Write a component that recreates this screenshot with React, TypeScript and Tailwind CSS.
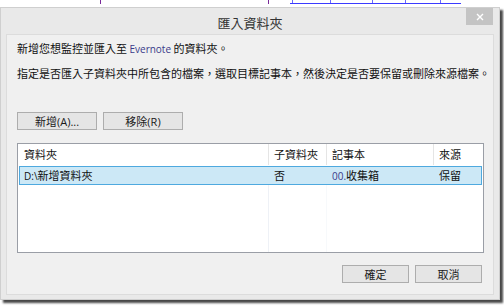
import React from "react";

const cjk = { fontFamily: '"Noto Sans CJK TC", "Noto Sans", sans-serif' };

function Btn({ children, w }: { children: React.ReactNode; w: string }) {
  return (
    <div
      className={`${w} h-[18px] flex items-center justify-center border border-[#adadad] bg-[#e5e5e5] text-[11px] text-[#1a1a1a] leading-none`}
    >
      {children}
    </div>
  );
}

export default function App() {
  return (
    <div className="w-[504px] h-[307px] bg-white overflow-hidden relative" style={cjk}>
      {/* cropped link fragments above */}
      <div className="h-[7px] relative">
        <div className="absolute left-[100px] top-0 w-[1px] h-[4px] bg-[#7a2a9a]" />
        <div className="absolute left-[268px] top-0 w-[1px] h-[4px] bg-[#7a2a9a]" />
        <div className="absolute left-[290px] top-[3px] w-[171px] h-[1px] bg-[#3b3bff]" />
        <div className="absolute left-[292px] top-0 w-[1px] h-[3px] bg-[#6a6aff]" />
        <div className="absolute left-[330px] top-0 w-[1px] h-[3px] bg-[#6a6aff]" />
        <div className="absolute left-[372px] top-0 w-[1px] h-[3px] bg-[#6a6aff]" />
        <div className="absolute left-[405px] top-0 w-[1px] h-[3px] bg-[#6a6aff]" />
        <div className="absolute left-[440px] top-0 w-[1px] h-[3px] bg-[#6a6aff]" />
      </div>
      {/* window */}
      <div className="w-[500px] h-[293px] bg-[#e9e9e9] border border-[#cfcfcf] shadow-[3px_3px_2px_rgba(40,40,40,0.85)] flex flex-col">
        {/* title bar */}
        <div className="h-[26px] flex items-center relative">
          <div className="flex-1 text-center text-[13px] text-[#333] leading-none pt-[2px]">匯入資料夾</div>
          <div className="absolute right-[6px] top-0 w-[27px] h-[17px] bg-[#c4c4c4] flex items-center justify-center">
            <svg width="8" height="8" viewBox="0 0 8 8">
              <path d="M1 1 L7 7 M7 1 L1 7" stroke="white" strokeWidth="1.4" />
            </svg>
          </div>
        </div>
        {/* inner panel */}
        <div className="ml-[5px] mr-[5px] h-[261px] bg-[#f0f0f0] border border-[#dcdcdc] flex flex-col px-[10px]">
          <div className="mt-[6px] text-[11px] leading-[14px] text-[#111]">
            新增您想監控並匯入至{" "}
            <span style={{ fontFamily: '"Open Sans", sans-serif' }} className="text-[#3a3a8a] text-[10px]">Evernote</span>{" "}
            的資料夾。
          </div>
          <div className="mt-[10px] text-[11px] leading-[14px] text-[#111] whitespace-nowrap">
            指定是否匯入子資料夾中所包含的檔案，選取目標記事本，然後決定是否要保留或刪除來源檔案。
          </div>
          <div className="mt-[32px] flex gap-[6px]">
            <Btn w="w-[80px]">
              新增<span style={{ fontFamily: '"Open Sans", sans-serif' }}>(A)...</span>
            </Btn>
            <Btn w="w-[80px]">
              移除<span style={{ fontFamily: '"Open Sans", sans-serif' }}>(R)</span>
            </Btn>
          </div>
          {/* list */}
          <div className="mt-[13px] w-[467px] h-[110px] bg-white border border-[#9a9ea6] flex flex-col relative">
            <div className="h-[21px] flex text-[11px] text-[#111] items-center">
              <div className="w-[250px] pl-[6px] h-full flex items-center">資料夾</div>
              <div className="w-[58px] pl-[5px] h-full flex items-center border-l border-[#e5e5e5]">子資料夾</div>
              <div className="w-[107px] pl-[5px] h-full flex items-center border-l border-[#e5e5e5]">記事本</div>
              <div className="flex-1 pl-[5px] h-full flex items-center border-l border-[#e5e5e5]">來源</div>
            </div>
            <div className="mx-[1px] mt-[1px] h-[19px] flex items-center text-[11px] text-[#111] bg-[#cce8f6] border border-[#4ea9df]">
              <div className="w-[249px] pl-[4px]">
                <span style={{ fontFamily: '"Open Sans", sans-serif' }} className="text-[10px]">D:\</span>新增資料夾
              </div>
              <div className="w-[58px] pl-[5px]">否</div>
              <div className="w-[107px] pl-[5px]">
                <span style={{ fontFamily: '"Open Sans", sans-serif' }} className="text-[10px] text-[#3a3a8a]">00.</span>收集箱
              </div>
              <div className="flex-1 pl-[5px]">保留</div>
            </div>
            <div className="flex-1 flex">
              <div className="w-[250px]" />
              <div className="w-[58px] border-l border-[#eef1f6]" />
              <div className="w-[107px] border-l border-[#f7f9fb]" />
            </div>
          </div>
          <div className="mt-[12px] flex justify-end gap-[6px] pr-[1px]">
            <Btn w="w-[67px]">確定</Btn>
            <Btn w="w-[67px]">取消</Btn>
          </div>
        </div>
      </div>
    </div>
  );
}
